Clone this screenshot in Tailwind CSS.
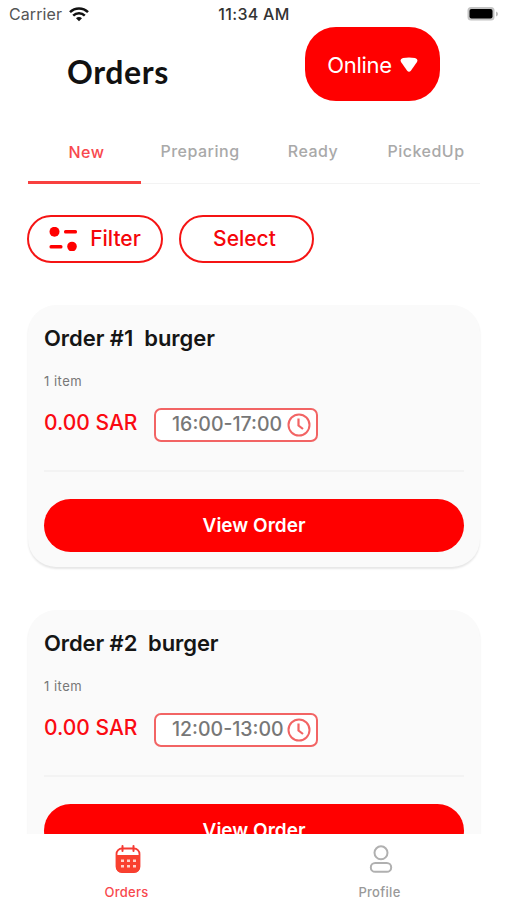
<!DOCTYPE html>
<html lang="en">
  <head>
    <meta charset="UTF-8" />
    <meta name="viewport" content="width=device-width, initial-scale=1.0" />
    <title>Orders</title>
    <script src="https://cdn.jsdelivr.net/npm/@tailwindcss/browser@4"></script>
  </head>
  <body class="bg-white font-['Inter',sans-serif]">
    <div class="w-[506px] h-[900px] flex flex-col overflow-hidden">
      <!-- Status Bar -->
      <div class="h-[27px] shrink-0 grid grid-cols-3 items-center pl-[9px] pr-[7px]">
        <div class="flex items-center gap-[7px]">
          <span class="text-base text-[#555] tracking-[0.1px]">Carrier</span>
          <svg class="w-5 h-4" viewBox="0 0 20 16" fill="none" stroke="#111" stroke-width="2.5">
            <path d="M1 6.2a12.7 12.7 0 0 1 18 0" />
            <path d="M4.2 9.6a8.2 8.2 0 0 1 11.6 0" />
            <path d="M10 15.2l-3-3a4.2 4.2 0 0 1 6 0z" fill="#111" stroke="none" />
          </svg>
        </div>
        <span class="text-base font-medium text-[#333] text-center whitespace-nowrap tracking-[0.3px]">11:34 AM</span>
        <svg class="w-8 h-4 justify-self-end" viewBox="0 0 32 16">
          <rect x="0.5" y="1" width="27" height="13.5" rx="3.5" fill="#c4c4c4" />
          <rect x="2.5" y="3" width="23" height="9.5" rx="2" fill="#000" />
          <path d="M29 5.5v5q2-.8 2-2.5t-2-2.5z" fill="#bbb" />
        </svg>
      </div>

      <!-- Header -->
      <div class="h-[74px] shrink-0 flex items-center justify-between pl-[67px] pr-[66px]">
        <h1 class="font-['Lato',sans-serif] text-[32px] font-bold text-[#111] tracking-[0.6px] pt-4">Orders</h1>
        <button class="w-[135px] h-[74px] rounded-[31px] bg-[#ff0000] text-white flex items-center justify-center gap-2 pt-0.5">
          <span class="text-[22px] tracking-[-0.3px]">Online</span>
          <svg class="w-[18px] h-4" viewBox="0 0 18 16" fill="#fff">
            <path d="M3 1Q9-.2 15 1q3.500.9 2 4l-6 8.500q-2 2.500-4 0L1 5Q-.5 1.900 3 1z" />
          </svg>
        </button>
      </div>

      <!-- Tabs -->
      <div class="h-[83px] shrink-0 ml-7 mr-[26px] pt-[18px] grid grid-cols-4 border-b border-[#f3f3f3] text-base font-medium text-[#a9a9a9] text-center tracking-[0.5px]">
        <button class="-mb-px pt-[3px] pl-1 border-b-[3px] border-[#f8403f] text-[#f8484d]">New</button>
        <button class="pl-[5px]">Preparing</button>
        <button class="pl-[5px]">Ready</button>
        <button class="pl-[5px]">PickedUp</button>
      </div>

      <!-- Actions -->
      <div class="shrink-0 flex gap-4 pl-[27px] pt-[31px] text-[21px] font-medium text-[#f5050a]">
        <button class="w-[136px] h-12 rounded-full border-[2.5px] border-[#f51414] flex items-center justify-center gap-[13px]">
          <svg class="w-7 h-6" viewBox="0 0 28 24" fill="#f00">
            <circle cx="5.500" cy="4.800" r="5" />
            <rect x="15" y="3" width="13" height="3.600" rx="1.500" />
            <rect x="0.500" y="18" width="13" height="3.600" rx="1.500" />
            <circle cx="23" cy="19.500" r="4.800" />
          </svg>
          <span>Filter</span>
        </button>
        <button class="w-[135px] h-12 rounded-full border-[2.5px] border-[#f51414] pr-1">Select</button>
      </div>

      <!-- Order List -->
      <div class="flex-1 min-h-0 overflow-hidden pl-7 pr-[26px] pt-[42px] flex flex-col gap-[43px]">
        <div class="h-[262px] shrink-0 rounded-[28px] bg-[#fafafa] px-4 shadow-[0_2px_2px_#e7e7e7]">
          <h2 class="pt-[17px] text-[22px] leading-8 font-semibold text-[#151515] whitespace-pre tracking-[-0.05px]">Order #1  burger</h2>
          <p class="mt-[17px] text-[13px] leading-5 text-[#777] tracking-[0.5px]">1 item</p>
          <div class="mt-[17px] h-[34px] flex items-center">
            <span class="w-[110px] pb-1 text-[21px] font-medium text-[#fa0a12] whitespace-nowrap">0.00 SAR</span>
            <div class="w-[164px] h-[34px] rounded-[7px] border-2 border-[#f26464] bg-white flex items-center pl-4 gap-1 text-[#777]">
              <span class="w-[111px] text-[19.5px] font-medium whitespace-nowrap">16:00-17:00</span>
              <svg class="w-6 h-6" viewBox="0 0 24 24" fill="none" stroke="#f26464" stroke-width="2">
                <circle cx="12" cy="12" r="10.500" />
                <path d="M11.500 5.500v7l4.500 3.500" stroke-width="2.200" />
              </svg>
            </div>
          </div>
          <div class="mt-7 border-b-2 border-[#f3f3f3]"></div>
          <button class="mt-[27px] w-[420px] h-[53px] rounded-full bg-[#ff0000] text-white text-[19px] font-semibold pt-0.5">View Order</button>
        </div>

        <div class="h-[262px] shrink-0 rounded-[28px] bg-[#fafafa] px-4 shadow-[0_2px_2px_#e7e7e7]">
          <h2 class="pt-[17px] text-[22px] leading-8 font-semibold text-[#151515] whitespace-pre tracking-[-0.1px]">Order #2  burger</h2>
          <p class="mt-[17px] text-[13px] leading-5 text-[#777] tracking-[0.5px]">1 item</p>
          <div class="mt-[17px] h-[34px] flex items-center">
            <span class="w-[110px] pb-1 text-[21px] font-medium text-[#fa0a12] whitespace-nowrap">0.00 SAR</span>
            <div class="w-[164px] h-[34px] rounded-[7px] border-2 border-[#f26464] bg-white flex items-center pl-4 gap-1 text-[#777]">
              <span class="w-[111px] text-[19.5px] font-medium whitespace-nowrap">12:00-13:00</span>
              <svg class="w-6 h-6" viewBox="0 0 24 24" fill="none" stroke="#f26464" stroke-width="2">
                <circle cx="12" cy="12" r="10.500" />
                <path d="M11.500 5.500v7l4.500 3.500" stroke-width="2.200" />
              </svg>
            </div>
          </div>
          <div class="mt-7 border-b-2 border-[#f3f3f3]"></div>
          <button class="mt-[27px] w-[420px] h-[53px] rounded-full bg-[#ff0000] text-white text-[19px] font-semibold pt-0.5">View Order</button>
        </div>
      </div>

      <!-- Bottom Navigation -->
      <div class="h-[66px] shrink-0 grid grid-cols-2 bg-white text-[13px] font-medium tracking-[0.3px]">
        <a class="flex flex-col items-center gap-[9px] pt-[11px] text-[#f8484d]">
          <svg class="w-[26px] h-7 ml-[3px]" viewBox="0 0 26 28">
            <rect x="1.500" y="3.500" width="23" height="23.500" rx="5.500" fill="#fff" stroke="#f53a32" stroke-width="1.800" />
            <path d="M1 10h24v11.500q0 6-6 6H7q-6 0-6-6z" fill="#f9402f" />
            <path d="M7.500 1v5M18.500 1v5" stroke="#f53a32" stroke-width="2" stroke-linecap="round" />
            <g fill="#ffd0c8">
              <rect x="6" y="14.500" width="3" height="2.500" /><rect x="12" y="14.500" width="3" height="2.500" /><rect x="18" y="14.500" width="3" height="2.500" />
              <rect x="6" y="20" width="3" height="2.500" /><rect x="12" y="20" width="3" height="2.500" /><rect x="18" y="20" width="3" height="2.500" />
            </g>
          </svg>
          <span class="leading-5">Orders</span>
        </a>
        <a class="flex flex-col items-center gap-[9px] pt-[11px] text-[#999]">
          <svg class="w-6 h-7 ml-[3px]" viewBox="0 0 24 28" fill="none" stroke="#b0b0b0" stroke-width="2">
            <circle cx="12" cy="7.800" r="6.500" />
            <rect x="1.800" y="18" width="20.400" height="8.800" rx="4.400" />
          </svg>
          <span class="leading-5">Profile</span>
        </a>
      </div>
    </div>
  </body>
</html>
